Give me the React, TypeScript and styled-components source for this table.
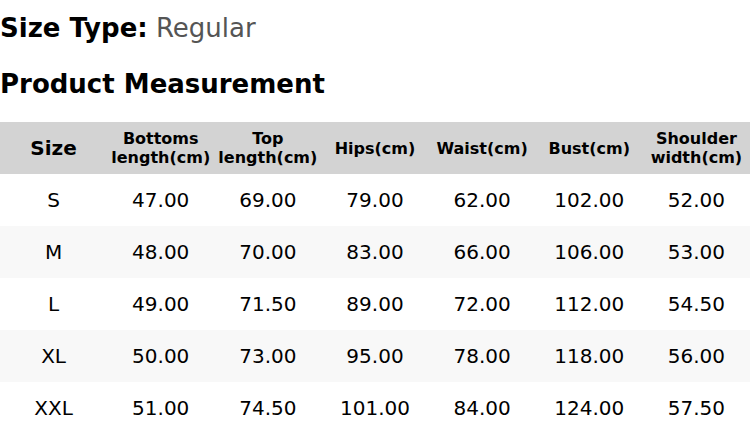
import styled, { createGlobalStyle } from "styled-components";

const GlobalStyle = createGlobalStyle`
  body {
    margin: 0;
    background: #ffffff;
    font-family: "DejaVu Sans", Verdana, sans-serif;
    color: #000000;
  }
`;

const columns = [
  { key: "size", label: ["Size"] },
  { key: "bottoms", label: ["Bottoms", "length(cm)"] },
  { key: "top", label: ["Top", "length(cm)"] },
  { key: "hips", label: ["Hips(cm)"] },
  { key: "waist", label: ["Waist(cm)"] },
  { key: "bust", label: ["Bust(cm)"] },
  { key: "shoulder", label: ["Shoulder", "width(cm)"] },
];

const rows = [
  ["S", "47.00", "69.00", "79.00", "62.00", "102.00", "52.00"],
  ["M", "48.00", "70.00", "83.00", "66.00", "106.00", "53.00"],
  ["L", "49.00", "71.50", "89.00", "72.00", "112.00", "54.50"],
  ["XL", "50.00", "73.00", "95.00", "78.00", "118.00", "56.00"],
  ["XXL", "51.00", "74.50", "101.00", "84.00", "124.00", "57.50"],
];

export default function App() {
  return (
    <Wrapper>
      <GlobalStyle />
      <SizeType>
        <Label>Size Type:</Label> <Value>Regular</Value>
      </SizeType>
      <Heading>Product Measurement</Heading>
      <Table>
        <thead>
          <tr>
            {columns.map((col) => (
              <HeadCell key={col.key} $large={col.key === "size"}>
                {col.label.map((line, i) => (
                  <HeadLine key={i}>{line}</HeadLine>
                ))}
              </HeadCell>
            ))}
          </tr>
        </thead>
        <tbody>
          {rows.map((row, r) => (
            <Row key={row[0]} $shaded={r % 2 === 1}>
              {row.map((cell, c) => (
                <Cell key={c}>{cell}</Cell>
              ))}
            </Row>
          ))}
        </tbody>
      </Table>
    </Wrapper>
  );
}

const Wrapper = styled.div`
  display: flex;
  flex-direction: column;
  width: 750px;
  padding-top: 13px;
`;

const SizeType = styled.div`
  font-size: 26px;
  line-height: 30px;
`;

const Label = styled.span`
  font-weight: 700;
`;

const Value = styled.span`
  color: #555555;
`;

const Heading = styled.h2`
  margin: 26px 0 23px 0;
  font-size: 26px;
  line-height: 30px;
  font-weight: 700;
`;

const Table = styled.table`
  width: 750px;
  border-collapse: collapse;
  table-layout: fixed;
`;

const HeadCell = styled.th<{ $large?: boolean }>`
  height: 52px;
  padding: 0;
  background: #d3d3d3;
  font-size: ${(p) => (p.$large ? "20px" : "16px")};
  font-weight: 700;
  line-height: 19px;
  text-align: center;
  vertical-align: middle;
`;

const HeadLine = styled.div`
  white-space: nowrap;
`;

const Row = styled.tr<{ $shaded?: boolean }>`
  background: ${(p) => (p.$shaded ? "#f8f8f8" : "#ffffff")};
`;

const Cell = styled.td`
  height: 52px;
  padding: 0;
  font-size: 20px;
  text-align: center;
  vertical-align: middle;
`;
